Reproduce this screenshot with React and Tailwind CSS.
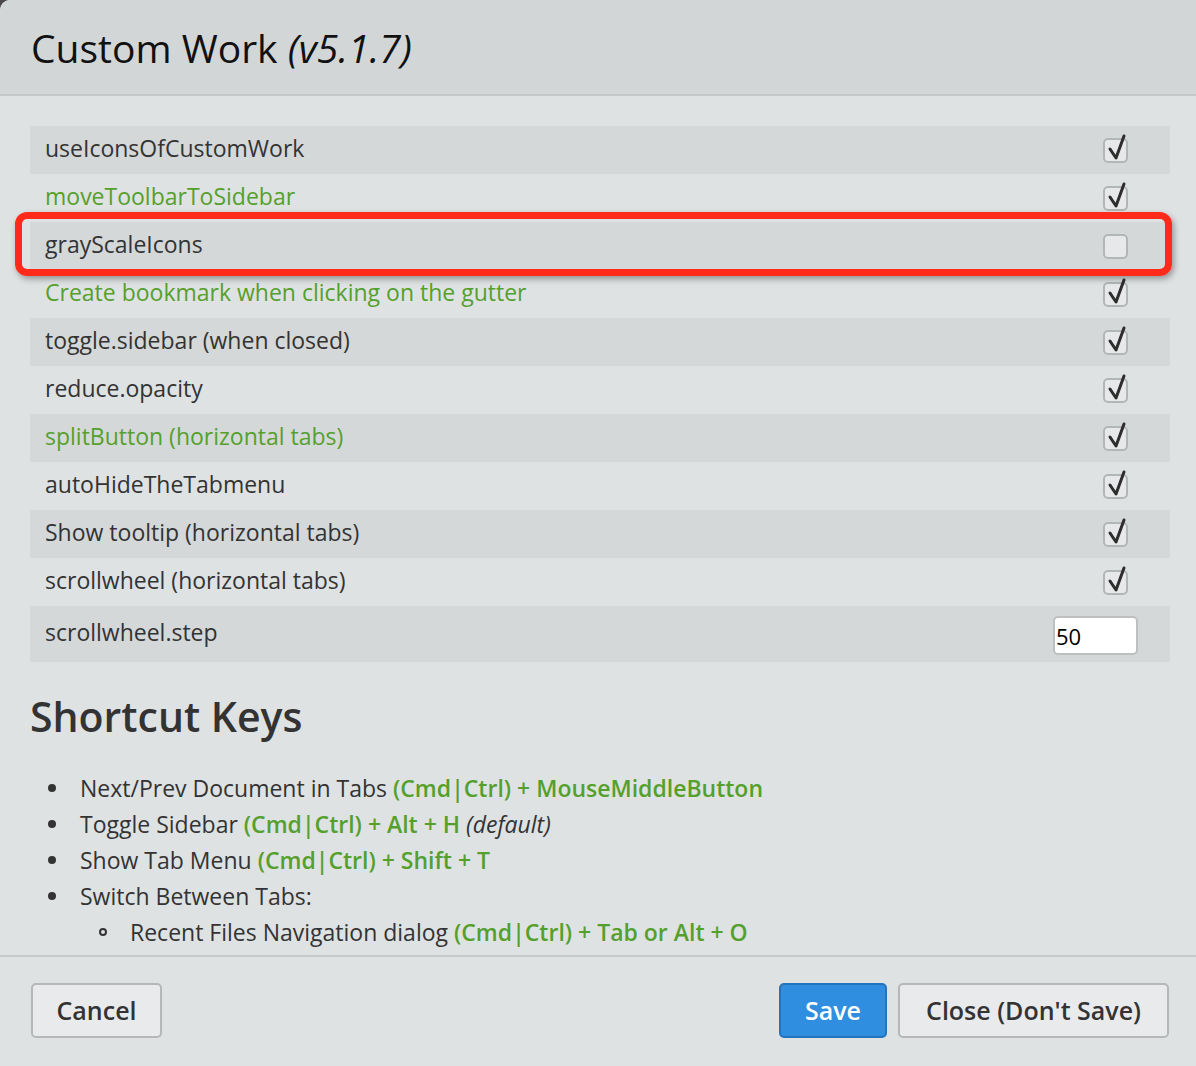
import React from 'react';

const font = { fontFamily: '"Open Sans", Lato, sans-serif' };

const rows = [
  { label: 'useIconsOfCustomWork', checked: true },
  { label: 'moveToolbarToSidebar', checked: true, green: true },
  { label: 'grayScaleIcons', checked: false },
  { label: 'Create bookmark when clicking on the gutter', checked: true, green: true },
  { label: 'toggle.sidebar (when closed)', checked: true },
  { label: 'reduce.opacity', checked: true },
  { label: 'splitButton (horizontal tabs)', checked: true, green: true },
  { label: 'autoHideTheTabmenu', checked: true },
  { label: 'Show tooltip (horizontal tabs)', checked: true },
  { label: 'scrollwheel (horizontal tabs)', checked: true },
];

const Checkbox = ({ checked }) => (
  <div className="relative w-[25px] h-[25px] rounded-[5px] border-2 border-[#b3b6b7] bg-[#e6e8e9]">
    {checked && (
      <svg className="absolute left-[2px] top-[-6px]" width="22" height="28" viewBox="0 0 22 28">
        <path d="M3 15 L9 24 L17 2" fill="none" stroke="#2d2d2d" strokeWidth="3" strokeLinecap="round" strokeLinejoin="round" />
      </svg>
    )}
  </div>
);

const Key = ({ children }) => <span className="font-semibold text-[#55a02c]">{children}</span>;

const Item = ({ children, nested }) => (
  <li className={`flex items-center h-[36px] ${nested ? 'pl-[69px]' : 'pl-[18px]'}`}>
    <span
      className={`shrink-0 w-[8px] h-[8px] rounded-full ${nested ? 'border-2 border-[#333] mr-[23px]' : 'bg-[#333] mr-[24px]'}`}
    />
    <span className="whitespace-nowrap">{children}</span>
  </li>
);

export default function App() {
  return (
    <div className="bg-[#4a4a4a] w-[1196px] h-[1066px]" style={font}>
      <div className="w-full h-full bg-[#dfe2e3] rounded-tl-[10px] overflow-hidden flex flex-col">
        <div className="h-[96px] shrink-0 bg-[#d3d6d7] border-b-2 border-[#c5c7c8] px-[31px] flex items-center">
          <h1 className="text-[39px] text-[#111] leading-none">
            Custom Work <span className="italic">(v5.1.7)</span>
          </h1>
        </div>

        <div className="flex-1 pl-[30px] pr-[26px] pt-[30px]">
          <div className="relative">
            {rows.map((r, i) => (
              <div
                key={r.label}
                className={`h-[48px] flex items-center justify-between pl-[15px] pr-[42px] ${i % 2 === 0 ? 'bg-[#d5d8d9]' : ''}`}
              >
                <span className={`text-[23px] leading-none pb-[3px] ${r.green ? 'text-[#55a02c]' : 'text-[#333]'}`}>{r.label}</span>
                <Checkbox checked={r.checked} />
              </div>
            ))}
            <div className="h-[56px] flex items-center justify-between pl-[15px] pr-[32px] bg-[#d5d8d9]">
              <span className="text-[23px] text-[#333] leading-none pb-[3px]">scrollwheel.step</span>
              <input
                readOnly
                value="50"
                className="w-[85px] h-[39px] mt-[3px] bg-white border-2 border-[#bdbfc0] rounded-[5px] px-[1px] text-[22px] text-black outline-none"
                style={font}
              />
            </div>
            <div className="absolute left-[-15px] top-[86px] w-[1157px] h-[64px] border-[7px] border-[#ff2a1a] rounded-[12px] shadow-[2px_3px_6px_rgba(0,0,0,0.35)] pointer-events-none" />
          </div>

          <h2 className="mt-[30px] text-[41px] font-semibold text-[#333] leading-[48px]">Shortcut Keys</h2>

          <ul className="mt-[30px] text-[23px] text-[#333]">
            <Item>Next/Prev Document in Tabs <Key>(Cmd|Ctrl) + MouseMiddleButton</Key></Item>
            <Item>Toggle Sidebar <Key>(Cmd|Ctrl) + Alt + H</Key> <span className="italic">(default)</span></Item>
            <Item>Show Tab Menu <Key>(Cmd|Ctrl) + Shift + T</Key></Item>
            <Item>Switch Between Tabs:</Item>
            <Item nested>Recent Files Navigation dialog <Key>(Cmd|Ctrl) + Tab or Alt + O</Key></Item>
          </ul>
        </div>

        <div className="h-[111px] shrink-0 border-t-2 border-[#c5c7c8] pl-[31px] pr-[27px] flex items-center justify-between pb-[2px]">
          <button className="h-[55px] w-[131px] rounded-[5px] border-2 border-[#b5b7b8] bg-[#e8eaeb] text-[25px] font-semibold text-[#333]">
            Cancel
          </button>
          <div className="flex items-center gap-[11px]">
            <button className="h-[55px] w-[108px] rounded-[5px] border-2 border-[#2174bd] bg-[#2f8ee0] text-[25px] font-semibold text-white">
              Save
            </button>
            <button className="h-[55px] w-[271px] rounded-[5px] border-2 border-[#b5b7b8] bg-[#e8eaeb] text-[25px] font-semibold text-[#333]">
              Close (Don't Save)
            </button>
          </div>
        </div>
      </div>
    </div>
  );
}
